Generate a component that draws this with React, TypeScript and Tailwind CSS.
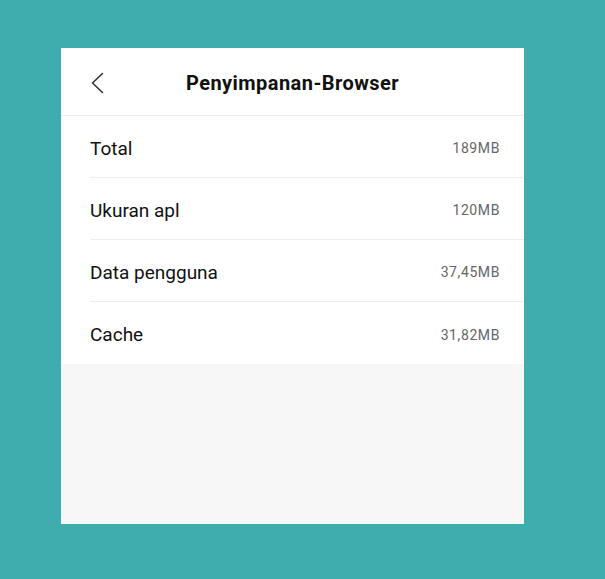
import React from "react";

const rows = [
  { label: "Total", value: "189MB" },
  { label: "Ukuran apl", value: "120MB" },
  { label: "Data pengguna", value: "37,45MB" },
  { label: "Cache", value: "31,82MB" },
];

export default function App() {
  return (
    <div
      className="w-[605px] h-[579px] bg-[#3fadad] pt-[48px] pl-[61px]"
      style={{ fontFamily: "Roboto, 'Noto Sans', sans-serif" }}
    >
      <div className="w-[463px] h-[476px] bg-[#f7f7f7] flex flex-col">
        <div className="bg-white">
          <div className="relative h-[68px] flex items-center justify-center border-b border-[#eeeeee] pt-[2px]">
            <svg
              className="absolute left-[29px] top-[24px]"
              width="14"
              height="22"
              viewBox="0 0 14 22"
              fill="none"
            >
              <path d="M12.5 1.5 L2.5 11 L12.5 20.5" stroke="#333333" strokeWidth="1.6" strokeLinecap="round" strokeLinejoin="round" />
            </svg>
            <span className="text-[20px] font-bold text-[#111111] leading-none tracking-[0.45px]">
              Penyimpanan-Browser
            </span>
          </div>
          {rows.map((r, i) => (
            <div key={r.label} className="pl-[29px]">
              <div
                className={
                  "flex items-center justify-between pr-[24px] pt-[3px] h-[62px] " +
                  (i < rows.length - 1 ? "border-b border-[#eeeeee]" : "")
                }
              >
                <span className="text-[19px] text-[#111111] leading-none">{r.label}</span>
                <span className="text-[14px] text-[#666666] leading-none tracking-[0.6px]">{r.value}</span>
              </div>
            </div>
          ))}
        </div>
      </div>
    </div>
  );
}
